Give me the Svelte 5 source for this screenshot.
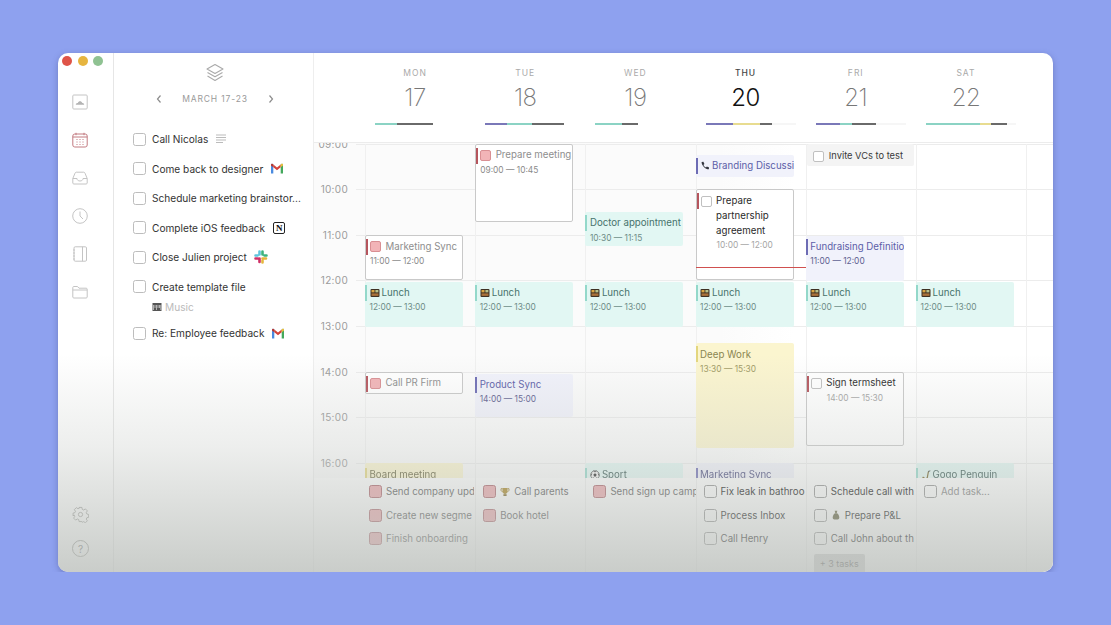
<script>
  const hourH = 45.6, colW = 110.2;
  const y = (h) => h * hourH;
  const days = [
    { d: 'MON', n: 17, segs: [['#8bd3c4', 22], ['#6a6a6a', 36]] },
    { d: 'TUE', n: 18, segs: [['#7a78b8', 22], ['#8bd3c4', 25], ['#6a6a6a', 32]] },
    { d: 'WED', n: 19, segs: [['#8bd3c4', 27], ['#6a6a6a', 16]] },
    { d: 'THU', n: 20, today: true, faint: true, segs: [['#7a78b8', 27], ['#e8dc90', 27], ['#6a6a6a', 12]] },
    { d: 'FRI', n: 21, faint: true, segs: [['#7a78b8', 24], ['#8bd3c4', 12], ['#6a6a6a', 24]] },
    { d: 'SAT', n: 22, faint: true, segs: [['#8bd3c4', 54], ['#e8dc90', 11], ['#6a6a6a', 16]] }
  ];
  const hours = ['09:00', '10:00', '11:00', '12:00', '13:00', '14:00', '15:00', '16:00'];
  const lunch = (c) => ({ c, t: 3.03, h: 0.98, k: 'teal', title: 'Lunch', time: '12:00 — 13:00', icon: 'lunch' });
  const events = [
    { c: 1, t: 0, h: 1.71, k: 'task', done: true, title: 'Prepare meeting', time: '09:00 — 10:45' },
    { c: 0, t: 2, h: 1, k: 'task', done: true, title: 'Marketing Sync', time: '11:00 — 12:00' },
    { c: 2, t: 1.5, h: 0.75, k: 'teal', title: 'Doctor appointment', time: '10:30 — 11:15' },
    { c: 3, t: 0.24, h: 0.48, k: 'purple', title: 'Branding Discussi', icon: 'phone' },
    { c: 3, t: 1, h: 2, k: 'task', multi: true, title: 'Prepare partnership agreement', time: '10:00 — 12:00' },
    { c: 4, t: 0, h: 0.5, k: 'plain', title: 'Invite VCs to test' },
    { c: 4, t: 2.02, h: 1, k: 'purple', title: 'Fundraising Definitio', time: '11:00 — 12:00' },
    lunch(0), lunch(1), lunch(2), lunch(3), lunch(4), lunch(5),
    { c: 3, t: 4.38, h: 2.3, k: 'yellow', title: 'Deep Work', time: '13:30 — 15:30' },
    { c: 0, t: 5, h: 0.5, k: 'task', done: true, title: 'Call PR Firm' },
    { c: 1, t: 5.04, h: 0.95, k: 'purple', title: 'Product Sync', time: '14:00 — 15:00' },
    { c: 4, t: 5, h: 1.64, k: 'task', title: 'Sign termsheet', time: '14:00 — 15:30' },
    { c: 0, t: 7, h: 0.5, k: 'yellow', low: true, title: 'Board meeting' },
    { c: 2, t: 7, h: 0.5, k: 'teal', low: true, title: 'Sport', icon: 'ball' },
    { c: 3, t: 7, h: 0.5, k: 'purple', low: true, title: 'Marketing Sync' },
    { c: 5, t: 7, h: 0.5, k: 'teal', low: true, title: 'Gogo Penguin', icon: 'sax' }
  ];
  const tasks = [
    [{ l: 'Send company upd', p: 1 }, { l: 'Create new segme', p: 1 }, { l: 'Finish onboarding', p: 1 }],
    [{ l: 'Call parents', p: 1, icon: 'trophy' }, { l: 'Book hotel', p: 1 }],
    [{ l: 'Send sign up camp', p: 1 }],
    [{ l: 'Fix leak in bathroo' }, { l: 'Process Inbox' }, { l: 'Call Henry' }],
    [{ l: 'Schedule call with' }, { l: 'Prepare P&L', icon: 'bag' }, { l: 'Call John about th' }],
    [{ l: 'Add task...', muted: 1 }]
  ];
  const list = [
    { l: 'Call Nicolas', a: 'notes' },
    { l: 'Come back to designer', a: 'gmail' },
    { l: 'Schedule marketing brainstor...' },
    { l: 'Complete iOS feedback', a: 'notion' },
    { l: 'Close Julien project', a: 'slack' },
    { l: 'Create template file', sub: 'Music' },
    { l: 'Re: Employee feedback', a: 'gmail' }
  ];
</script>

{#snippet emoji(name)}
  {#if name === 'lunch'}
    <svg class="emo" viewBox="0 0 10 10"><rect x=".5" y="1" width="9" height="8" rx="1" fill="#3e3022"/><rect x="1.5" y="2" width="3" height="2.4" fill="#d9a441"/><rect x="5.4" y="2" width="3" height="2.4" fill="#b9c28b"/><rect x="1.5" y="5.4" width="7" height="2.5" fill="#a9713a"/></svg>
  {:else if name === 'phone'}
    <svg class="emo" viewBox="0 0 10 10"><path d="M1.6 1 3.4.7l1 2.2-1 1c.5 1.100 1.300 1.900 2.500 2.500l1-1 2.200 1-.3 1.900C6 8.600 1.300 4.500 1.600 1Z" fill="#33363f"/></svg>
  {:else if name === 'ball'}
    <svg class="emo" viewBox="0 0 10 10"><circle cx="5" cy="5" r="4.300" fill="#f4f4f4" stroke="#333" stroke-width=".7"/><path d="M5 3.300 6.600 4.500 6 6.400H4L3.400 4.500Z" fill="#222"/><path d="M3.500 .9 5 2l1.500-1.100M1 5.600 1.800 3.500M9 5.600l-.8-2.100M3 9l.4-1.600M7 9l-.4-1.600" stroke="#222" stroke-width=".8" fill="none"/></svg>
  {:else if name === 'sax'}
    <svg class="emo" viewBox="0 0 10 10"><path d="M8.500 1.300 6.800 1.800 5.800 7c-.2 1-1.300 1.400-2 .8L2 6.500 1.200 7.700 3 9.300c1.500.8 3.500.2 3.900-1.600L7.800 2.600Z" fill="#6f5c1e"/><path d="M7 1.500 9.300.8" stroke="#222" stroke-width=".8"/></svg>
  {:else if name === 'trophy'}
    <svg class="emo" viewBox="0 0 10 10"><path d="M2.500 1h5v3.300a2.500 2.500 0 0 1-5 0Z" fill="#a57f14"/><path d="M2.500 1.700H1v1.300c0 1 .8 1.600 1.700 1.700M7.500 1.700H9v1.300c0 1-.8 1.600-1.700 1.700" fill="none" stroke="#94730f" stroke-width=".9"/><rect x="3.400" y="7.200" width="3.200" height="1.800" fill="#6f5710"/><rect x="4.400" y="6" width="1.200" height="1.500" fill="#94730f"/></svg>
  {:else if name === 'bag'}
    <svg class="emo" viewBox="0 0 10 10"><path d="M3.700.8h2.600L5.800 3h-1.600Z" fill="#55532a"/><path d="M3.800 3.200h2.400C7.500 4.500 8.300 6 8.300 7.500 8.300 8.700 7.600 9.400 6.700 9.400H3.300C2.400 9.400 1.700 8.700 1.700 7.500 1.700 6 2.500 4.500 3.800 3.200Z" fill="#494820"/></svg>
  {/if}
{/snippet}

{#snippet gmail()}
  <svg class="app" viewBox="0 0 14 11"><path d="M1 10.500V1.700C1 .8 2 .5 2.700 1L3.300 1.500V10.500Z" fill="#4a8be0"/><path d="M10.700 10.500V1.500L11.300 1c.7-.5 1.700-.2 1.700.7v8.800Z" fill="#44a85c"/><path d="M3.300 1.500 7 4.400 10.700 1.500V4.300L7 7.200 3.300 4.300Z" fill="#d5443a"/><path d="M10.700 1.500 11.300 1c.7-.5 1.700-.2 1.700.7v.9L10.700 4.300Z" fill="#efbd3d"/><path d="M1 1.700C1 .8 2 .5 2.700 1L3.300 1.500V4.300L1 2.600Z" fill="#b8372e"/></svg>
{/snippet}

<div class="window">
  <nav class="rail">
    <div class="lights"><i class="r"></i><i class="y"></i><i class="g"></i></div>
    <div class="railicons">
      <svg viewBox="0 0 16 16"><rect x=".8" y="1" width="14.400" height="14" rx="1" fill="none" stroke="#c4c4c4"/><path d="M3.800 10.800c0-1.500 1.100-2 2-1.900.4-1.100 1.200-1.600 2.200-1.600s1.900.6 2.300 1.600c1 0 1.900.5 1.900 1.900Z" fill="#b4b4b4"/></svg>
      <svg viewBox="0 0 16 16"><rect x=".8" y="2" width="14.400" height="13" rx="2" fill="none" stroke="#c27a80"/><path d="M.8 5h14.400M4 .8v2.400M12 .8v2.400" stroke="#c27a80" fill="none"/><path d="M4.500 7.500h1M7.500 7.500h1M10.500 7.500h1M4.500 10h1M7.500 10h1M10.500 10h1M4.500 12.500h1M7.500 12.500h1M10.500 12.500h1" stroke="#c27a80"/></svg>
      <svg viewBox="0 0 16 16"><path d="M.8 8.500 3 3.200C3.200 2.600 3.700 2.200 4.300 2.200h7.400c.6 0 1.100.4 1.300 1L15.200 8.500V13c0 .6-.5 1-1 1H1.800c-.5 0-1-.4-1-1ZM.8 8.500H5c0 1.500 1.200 2.500 3 2.500s3-1 3-2.500h4.200" fill="none" stroke="#c4c4c4"/></svg>
      <svg viewBox="0 0 16 16"><circle cx="8" cy="8" r="7.300" fill="none" stroke="#c4c4c4"/><path d="M8 3.500V8l3 3" fill="none" stroke="#c4c4c4"/></svg>
      <svg viewBox="0 0 16 16"><rect x="2" y=".8" width="12.500" height="14.400" rx="1.200" fill="none" stroke="#c4c4c4"/><path d="M10.500.8v14.400M1 4h2M1 7h2M1 10h2M1 13h2" stroke="#c4c4c4" fill="none"/></svg>
      <svg viewBox="0 0 16 16"><path d="M.8 3.500c0-.6.4-1 1-1h3.700l1.500 1.700h7.200c.6 0 1 .4 1 1V13c0 .6-.4 1-1 1H1.800c-.6 0-1-.4-1-1ZM.8 6h14.400" fill="none" stroke="#c4c4c4"/></svg>
    </div>
    <div class="railbottom">
      <svg viewBox="0 0 24 24"><path d="M10 2h4l.5 2.800 2 .9 2.400-1.600 2.800 2.800-1.600 2.400.9 2 2.500.7v4l-2.500.5-.9 2 1.600 2.400-2.800 2.800-2.400-1.600-2 .9L14 22h-4l-.5-2.800-2-.9-2.400 1.600-2.800-2.800 1.600-2.400-.9-2L1.500 14v-4l2.500-.5.9-2L3.300 5.100l2.800-2.800 2.400 1.600 2-.9Z" fill="none" stroke="#8e8e8a" stroke-width="1.100"/><circle cx="12" cy="12" r="3" fill="none" stroke="#8e8e8a" stroke-width="1.100"/></svg>
      <div class="help"><span>?</span></div>
    </div>
  </nav>

  <aside class="list">
    <svg class="layers" viewBox="0 0 20 20"><path d="M10 1.500 18 6l-8 4.500L2 6Z M2.500 9.500 10 13.800l7.500-4.300M2.500 13 10 17.500 17.500 13" fill="none" stroke="#aaa" stroke-width="1.100" stroke-linejoin="round"/></svg>
    <div class="range">
      <svg viewBox="0 0 8 10"><path d="M5.500 1.500 2.500 5l3 3.500" fill="none" stroke="#8d8d8d" stroke-width="1.200"/></svg>
      <span>MARCH 17-23</span>
      <svg viewBox="0 0 8 10"><path d="M2.500 1.500 5.500 5l-3 3.500" fill="none" stroke="#8d8d8d" stroke-width="1.200"/></svg>
    </div>
    <ul>
      {#each list as it}
        <li>
          <div class="row">
            <span class="box"></span>
            <span class="lbl">{it.l}</span>
            {#if it.a === 'notes'}
              <svg class="app note" viewBox="0 0 12 10"><path d="M1 1h10M1 3.500h10M1 6h10M1 8.500h7" stroke="#bbb" fill="none"/></svg>
            {:else if it.a === 'gmail'}
              {@render gmail()}
            {:else if it.a === 'notion'}
              <span class="notion">N</span>
            {:else if it.a === 'slack'}
              <svg class="app slack" viewBox="0 0 14 14"><path d="M5.500 1.500v3M1.500 5.500h2" stroke="#5ec4dc" stroke-width="2.600" stroke-linecap="round"/><path d="M8.500 1.500v3M10.500 5.500h2" stroke="#3cb37f" stroke-width="2.600" stroke-linecap="round"/><path d="M8.500 8.500h3.500M8.500 10.500v2" stroke="#e4b63d" stroke-width="2.600" stroke-linecap="round"/><path d="M5.500 8.500v3.500M1.500 8.500h2" stroke="#cf2f66" stroke-width="2.600" stroke-linecap="round"/></svg>
            {/if}
          </div>
          {#if it.sub}
            <div class="sub">
              <svg viewBox="0 0 10 10"><rect x=".5" y="1" width="9" height="8" fill="#555"/><path d="M1.500 3v5M3 3v3M4.500 3v5M6 3v3M7.500 3v3M8.800 3v5" stroke="#ddd" stroke-width=".7"/></svg>
              {it.sub}
            </div>
          {/if}
        </li>
      {/each}
    </ul>
  </aside>

  <main class="cal">
    <header class="head">
      {#each days as day}
        <div class="day" class:today={day.today}>
          <small>{day.d}</small>
          <b>{day.n}</b>
          <div class="track" class:faint={day.faint}>
            {#each day.segs as s}
              <i style="background:{s[0]};width:{s[1]}px"></i>
            {/each}
          </div>
        </div>
      {/each}
    </header>

    <section class="body">
      {#each hours as h}
        <div class="hour" style="height:{hourH}px">
          <span>{h}</span><i></i>
        </div>
      {/each}
      <div class="cols">
        {#each days as _, i}
          <div class="col" style="left:{i * colW}px"></div>
        {/each}
        <div class="col" style="left:{6 * colW}px"></div>
        {#each events as e}
          <article class="ev {e.k}" class:low={e.low} class:multi={e.multi} style="left:{e.c * colW}px;top:{y(e.t)}px;height:{y(e.h)}px">
            {#if e.k !== 'plain'}<em></em>{/if}
            <div class="ttl">
              {#if e.k === 'task' || e.k === 'plain'}
                <span class="cb" class:done={e.done}></span>
              {/if}
              {#if e.icon}{@render emoji(e.icon)}{/if}
              <span class="tx">{e.title}</span>
            </div>
            {#if e.time}<time class:ind={e.k === 'task' && !e.done}>{e.time}</time>{/if}
          </article>
        {/each}
        <div class="now"></div>
      </div>
    </section>

    <section class="tasks">
      {#each tasks as col, i}
        <div class="tcol" class:first={i === 0}>
          {#each col as t}
            <div class="tk" class:muted={t.muted}>
              <span class="tb" class:done={t.p}></span>
              {#if t.icon}{@render emoji(t.icon)}{/if}
              <span class="tl">{t.l}</span>
            </div>
          {/each}
          {#if i === 4}<div class="more">+ 3 tasks</div>{/if}
        </div>
      {/each}
      <div class="tcol last"></div>
    </section>
  </main>
  <div class="shade"></div>
</div>

<style>
  :global(body) {
    margin: 0;
    background: #8ea1ef;
    font-family: Inter, "Noto Sans", sans-serif;
  }
  .window {
    position: relative;
    display: flex;
    width: 995px;
    height: 519px;
    margin: 53px 0 0 58px;
    background: #fff;
    border-radius: 10px;
    overflow: hidden;
    box-shadow: 0 2px 6px rgba(60, 70, 130, .4);
  }
  .rail {
    width: 56px;
    flex: none;
    box-sizing: border-box;
    display: flex;
    flex-direction: column;
    align-items: flex-start;
    padding-left: 14px;
    border-right: 1px solid #e6e6e6;
  }
  .lights { display: flex; gap: 5.500px; padding-top: 3px; margin-left: -10px; }
  .lights i { width: 10px; height: 10px; border-radius: 50%; }
  .r { background: #df5448; }
  .y { background: #e6b540; }
  .g { background: #8fc292; }
  .railicons { display: flex; flex-direction: column; gap: 22px; margin-top: 28px; }
  .railicons svg { width: 16px; height: 16px; display: block; }
  .railbottom { margin-top: auto; padding-bottom: 15px; display: flex; flex-direction: column; align-items: center; gap: 17px; width: 17px; }
  .railbottom svg { width: 17px; height: 17px; display: block; }
  .help {
    width: 15px; height: 15px; border: 1px solid #8e8e8a; border-radius: 50%;
    display: flex; align-items: center; justify-content: center;
    font-size: 10px; color: #666;
  }
  .list {
    position: relative;
    width: 200px;
    flex: none;
    border-right: 1px solid #eee;
    box-sizing: border-box;
    display: flex;
    flex-direction: column;
    align-items: center;
  }
  .layers { width: 20px; height: 20px; margin: 10px 0 0 2px; }
  .range { display: flex; align-items: center; justify-content: center; gap: 19px; margin: 11px 0 0 3px; }
  .range svg { width: 8px; height: 10px; }
  .range span { font-size: 8.500px; letter-spacing: .85px; color: #9a9a9a; }
  ul { list-style: none; margin: 20.500px 0 0; padding: 0 0 0 19px; align-self: stretch; }
  li { min-height: 29.600px; }
  .row { display: flex; align-items: center; height: 15px; padding-top: 7px; }
  .box { width: 11px; height: 11px; border: 1px solid #bdbdbd; border-radius: 2.500px; flex: none; background: #fff; }
  .lbl { font-size: 10.150px; color: #333; margin-left: 6px; white-space: nowrap; }
  .app { width: 14px; height: 11px; margin-left: 7px; flex: none; }
  .note { width: 12px; height: 10px; }
  .slack { height: 14px; }
  .notion {
    width: 10px; height: 10px; margin-left: 8px; flex: none;
    border: 1.500px solid #222; border-radius: 2px;
    font: 700 9px/10px "Liberation Serif", serif; text-align: center; color: #111;
  }
  .sub { display: flex; align-items: center; gap: 3px; font-size: 10.150px; color: #bbb; margin: 6px 0 4.500px 19px; height: 14px; }
  .sub svg { width: 10px; height: 10px; }

  .cal { flex: 1; display: flex; flex-direction: column; min-width: 0; position: relative; }
  .head { height: 90px; flex: none; display: grid; grid-template-columns: repeat(6, 110.200px); padding-left: 51px; box-sizing: border-box; border-bottom: 1px solid #ececec; }
  .day { display: flex; flex-direction: column; align-items: center; width: 100px; }
  .day small { font-size: 8.500px; letter-spacing: 1px; margin-top: 15px; line-height: 11px; color: #aaa; }
  .day b { font-weight: 200; font-size: 24px; line-height: 29px; margin-top: 4px; color: #777; letter-spacing: -.5px; }
  .today small { color: #444; font-weight: 500; }
  .today b { color: #111; font-weight: 300; }
  .track { display: flex; align-self: flex-start; width: 90px; margin: 11px 0 0 10px; height: 2px; }
  .track.faint { background: #f6f6f6; }
  .track i { height: 2px; display: block; }

  .body { position: relative; height: 335px; flex: none; overflow: hidden; box-sizing: border-box; padding-top: .7px; background: linear-gradient(90deg, #fbfbfb 0 55%, #fff 65%); }
  .hour { display: flex; align-items: flex-start; box-sizing: border-box; }
  .hour span { width: 34px; text-align: right; font-size: 10px; letter-spacing: .3px; color: #9c9c9c; line-height: 12px; transform: translateY(-6px); flex: none; }
  .hour i { flex: 1; margin-left: 8px; height: 1px; background: #ececec; display: block; }
  .cols { position: absolute; left: 51px; top: .7px; right: 0; bottom: 0; }
  .col { position: absolute; top: 0; bottom: 0; width: 1px; background: #f0f0f0; }

  .ev {
    position: absolute; width: 98px; box-sizing: border-box; padding: 4.500px 0 0 4.500px;
    overflow: hidden; border-radius: 2px;
  }
  .ev em { position: absolute; left: 0; top: 3px; width: 2px; height: 16px; }
  .ev.low { padding-top: 5px; }
  .ev.low em { top: 5px; }
  .ttl { display: flex; align-items: center; gap: 2px; font-size: 9.700px; height: 14px; white-space: nowrap; }
  .multi .ttl { align-items: flex-start; height: auto; }
  .tx { line-height: 14.700px; }
  .multi .tx { white-space: normal; }
  time { display: block; font-size: 8.400px; margin-top: 2px; line-height: 11px; white-space: nowrap; }
  time.ind { margin-left: 16px; }

  .task { background: #fff; border: 1px solid #c9c9c9; padding: 4px 0 0 4px; }
  .task em { background: #b5555d; left: 0; top: 3px; }
  .task .ttl { gap: 4.500px; }
  .task .tx { color: #2a2a2a; }
  .task time { color: #a5a5a5; }
  .multi .cb { margin-top: 2px; }
  .cb { width: 9px; height: 9px; flex: none; border: 1px solid #c0c0c0; border-radius: 2px; background: #fff; }
  .cb.done { background: #f2b4b7; border-color: #d98f93; }
  .ev:has(.done) .tx { color: #8e8e8e; }
  .ev:has(.done) time { color: #8a8a8a; }
  .teal { background: #e2f7f3; }
  .teal em { background: #93d8ca; }
  .teal .tx { color: #47736c; }
  .teal time { color: #6e8c87; }
  .purple { background: #f1f2fb; }
  .purple em { background: #6d6cb4; }
  .purple .tx { color: #5c5ea8; }
  .purple time { color: #5f6190; }
  .yellow { background: #fbf5cf; }
  .yellow em { background: #e3d67e; }
  .yellow .tx { color: #8a8551; }
  .yellow time { color: #a19b66; }
  .low .tx { filter: brightness(.72); }
  .plain { background: #f4f4f4; width: 107px; padding-left: 6px; padding-top: 5.500px; margin-left: 1px; }
  .plain .ttl { font-size: 9.300px; gap: 5px; }
  .plain .tx { color: #3a3a3a; }
  .emo { width: 10px; height: 10px; flex: none; }
  .now { position: absolute; left: 331px; width: 110px; top: 123.500px; height: 1px; background: #d0504f; z-index: 2; }

  .tasks { height: 94px; flex: none; display: grid; grid-template-columns: repeat(6, 110.200px) 1fr; padding-left: 51px; box-sizing: border-box; background: #fff; position: relative; }
  .tcol { border-left: 1px solid #efefef; padding: 7px 0 0 7px; display: flex; flex-direction: column; gap: 9.700px; overflow: hidden; min-width: 0; }
  .tcol.first { padding-left: 4px; border-left: 0; margin-right: 1px; }
  .tk { display: flex; align-items: center; gap: 4px; height: 13.800px; white-space: nowrap; font-size: 9.700px; color: #000; flex: none; }
  .tb { width: 11px; height: 11px; border: 1px solid #8c8c8c; border-radius: 2.500px; flex: none; }
  .tb.done { background: #eda4a9; border-color: #a85c63; }
  .tk:has(.done) { color: #4e4e4e; }
  .muted { color: #777; }
  .more { align-self: flex-start; margin-top: -1px; padding: 4px 6px 5px; font-size: 9px; color: #333; background: #c8c8c8; border-radius: 2px; }
  .shade {
    position: absolute; inset: 0; pointer-events: none;
    background: linear-gradient(180deg, rgba(195, 199, 195, 0) 58%, rgba(195, 199, 195, .3) 76%, rgba(190, 194, 190, .82) 100%);
  }
</style>
